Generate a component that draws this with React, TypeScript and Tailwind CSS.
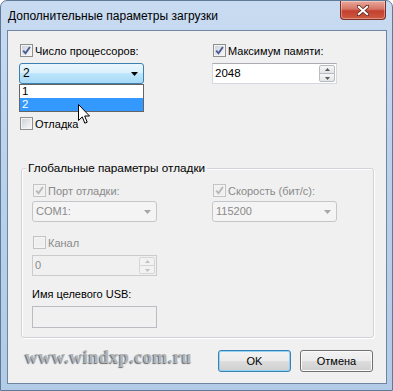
import React from 'react';

function Check({ checked, disabled }: { checked?: boolean; disabled?: boolean }) {
  return (
    <span
      className={`relative w-[13px] h-[13px] shrink-0 border ${
        disabled ? 'border-[#c3c3c3] bg-[#f4f4f4]' : 'border-[#8e8f8f] bg-[#f4f4f4]'
      }`}
    >
      <span
        className={`absolute inset-[1px] ${
          disabled ? 'bg-[#f0f0f0]' : 'bg-gradient-to-br from-[#cfd3d9] to-[#f7f7f7]'
        }`}
      />
      {checked && (
        <svg width="11" height="11" viewBox="0 0 11 11" className="absolute left-0 top-0">
          <path
            d="M2.2 5.6 L4.5 8.3 L8.9 2"
            stroke={disabled ? '#b8b8b8' : '#4a5b97'}
            strokeWidth="1.9"
            fill="none"
          />
        </svg>
      )}
    </span>
  );
}

function CheckRow({ label, checked, disabled }: { label: string; checked?: boolean; disabled?: boolean }) {
  return (
    <div className="flex items-center h-[13px] leading-[13px]">
      <span className="ml-[1px] flex">
        <Check checked={checked} disabled={disabled} />
      </span>
      <span className={`ml-[2px] pt-[1px] whitespace-nowrap ${disabled ? 'text-[#8a8a8a]' : 'text-black'}`}>{label}</span>
    </div>
  );
}

function Arrow({ color }: { color: string }) {
  return (
    <svg width="7" height="4" viewBox="0 0 7 4" className="absolute right-[5px] top-[8px]">
      <path d="M0 0 H7 L3.5 4 Z" fill={color} />
    </svg>
  );
}

function DisabledCombo({ value }: { value: string }) {
  return (
    <div className="relative mt-[4px] h-[21px] rounded-[3px] border border-[#c3c7ca] bg-[#f4f4f4] pl-[3px] leading-[19px] text-[#8a8a8a]">
      {value}
      <Arrow color="#a6a6a6" />
    </div>
  );
}

function SpinButtons({ disabled }: { disabled?: boolean }) {
  const btn = disabled
    ? 'relative flex-1 border border-[#d6d6d6] bg-[#f2f2f2]'
    : 'relative flex-1 border border-[#b7bcc2] bg-gradient-to-b from-[#f7f7f7] to-[#e2e4e7]';
  const fill = disabled ? '#c0c0c0' : '#5a5a5a';
  return (
    <div className="absolute right-[1px] top-[1px] bottom-[1px] w-[16px] flex flex-col">
      <div className={`${btn} rounded-t-[2px]`}>
        <svg width="5" height="3" viewBox="0 0 5 3" className="absolute left-[5px] top-[2px]">
          <path d="M0 3 L2.5 0 L5 3 Z" fill={fill} />
        </svg>
      </div>
      <div className={`${btn} rounded-b-[2px] -mt-[1px]`}>
        <svg width="5" height="3" viewBox="0 0 5 3" className="absolute left-[5px] top-[3px]">
          <path d="M0 0 L5 0 L2.5 3 Z" fill={fill} />
        </svg>
      </div>
    </div>
  );
}

function Button({ label, focused }: { label: string; focused?: boolean }) {
  return (
    <div
      className={`w-[73px] h-[22px] rounded-[3px] border flex items-center justify-center leading-[16px] bg-[linear-gradient(to_bottom,#f2f2f2_0%,#ebebeb_50%,#dddddd_50%,#cfcfcf_100%)] ${
        focused
          ? 'border-[#3c7fb1] shadow-[inset_0_0_0_1px_#8fd3f5]'
          : 'border-[#707070] shadow-[inset_0_0_0_1px_#fbfbfb]'
      }`}
    >
      {label}
    </div>
  );
}

export default function App() {
  return (
    <div className="w-[393px] h-[391px] overflow-hidden bg-white">
      <div className="w-[393px] h-[391px] rounded-t-[7px] border border-[#5f7a97] bg-gradient-to-b from-[#c8dbf1] via-[#b9d0ea] to-[#b2cbe6] font-['Liberation_Sans',Arial,sans-serif] text-[11px] text-black">
        {/* title bar */}
        <div className="flex items-start h-[29px]">
          <div className="pl-[7px] pt-[7px] leading-[16px] text-[12px] text-black whitespace-nowrap">
            Дополнительные параметры загрузки
          </div>
          <div className="relative ml-auto mr-[6px] w-[46px] h-[19px] rounded-b-[4px] border border-t-0 border-[#7b2e26] bg-[linear-gradient(to_bottom,#e8a99c_0%,#d47565_45%,#c2402f_55%,#cf5a3f_100%)] shadow-[inset_0_0_0_1px_rgba(255,255,255,0.35)]">
            <svg width="12" height="11" viewBox="0 0 12 11" className="absolute left-[16px] top-[4px]">
              <path d="M1.5 1.5 L10.5 9.5 M10.5 1.5 L1.5 9.5" stroke="#5a2a22" strokeWidth="3.6" strokeLinecap="square" />
              <path d="M1.8 1.8 L10.2 9.2 M10.2 1.8 L1.8 9.2" stroke="#ffffff" strokeWidth="2" strokeLinecap="square" />
            </svg>
          </div>
        </div>

        {/* client area */}
        <div className="relative ml-[6px] w-[380px] h-[354px] border border-[#6e86a2] bg-[#f0f0f0] pl-[11px] pr-[13px] pt-[13px]">
          <div className="flex">
            <div className="relative w-[125px]">
              <CheckRow label="Число процессоров:" checked />
              <div className="relative mt-[6px] h-[21px]">
                <div className="relative h-[21px] rounded-[3px] border border-[#3c7fb1] bg-[linear-gradient(to_bottom,#eaf6fd_0%,#d9f0fc_50%,#bee6fd_50%,#a7d9f5_100%)] pl-[3px] leading-[19px] text-[12px]">
                  2
                  <Arrow color="#000000" />
                </div>
                <div className="absolute left-0 top-[21px] z-10 w-[125px] border border-[#646464] bg-white text-[11.5px] leading-[13px]">
                  <div className="h-[13px] pl-[2px]">1</div>
                  <div className="h-[13px] pl-[2px] bg-[#3399ff] text-white">2</div>
                </div>
              </div>
              <div className="mt-[33px]">
                <CheckRow label="Отладка" />
              </div>
            </div>
            <div className="ml-[68px] w-[125px]">
              <CheckRow label="Максимум памяти:" checked />
              <div className="relative mt-[6px] h-[21px] border border-[#d5d8de] border-t-[#abadb3] bg-white pl-[2px] leading-[19px] text-[11.5px]">
                2048
                <SpinButtons />
              </div>
            </div>
          </div>

          {/* group box */}
          <div className="relative mt-[38px] ml-[2px] w-[353px] h-[170px] rounded-[3px] border border-[#d0d4d8] shadow-[inset_1px_1px_0_#ffffff,1px_1px_0_#ffffff] pl-[10px] pt-[15px]">
            <div className="absolute left-[4px] -top-[9px] px-[2px] bg-[#f0f0f0] leading-[16px] text-[11.75px] whitespace-nowrap">
              Глобальные параметры отладки
            </div>
            <div className="flex">
              <div className="w-[125px]">
                <CheckRow label="Порт отладки:" checked disabled />
                <DisabledCombo value="COM1:" />
                <div className="mt-[14px]">
                  <CheckRow label="Канал" disabled />
                </div>
                <div className="relative mt-[6px] h-[21px] border border-[#c9cbce] bg-[#f0f0f0] pl-[2px] leading-[19px] text-[#8a8a8a]">
                  0
                  <SpinButtons disabled />
                </div>
                <div className="mt-[10px] leading-[16px] whitespace-nowrap">Имя целевого USB:</div>
                <div className="mt-[4px] h-[22px] border border-[#b9bcc0] bg-[#f0f0f0]" />
              </div>
              <div className="ml-[55px] w-[125px]">
                <CheckRow label="Скорость (бит/с):" checked disabled />
                <DisabledCombo value="115200" />
              </div>
            </div>
          </div>

          {/* bottom row */}
          <div className="flex items-start mt-[12px]">
            <div className="ml-[6px] -mt-[4px] leading-[22px] font-['Liberation_Serif',serif] font-bold text-[18px] tracking-[0.5px] text-[#b4b4b4] [text-shadow:-1px_1px_1px_#6a6a6a] whitespace-nowrap">
              www.windxp.com.ru
            </div>
            <div className="ml-auto flex gap-[9px]">
              <Button label="OK" focused />
              <Button label="Отмена" />
            </div>
          </div>

          {/* mouse pointer */}
          <svg width="13" height="21" viewBox="0 0 13 21" className="absolute left-[70px] top-[73px] z-20">
            <path d="M0.5 0.5 L0.5 16.5 L4.3 12.9 L6.8 19.2 L9.2 18.2 L6.7 12 L11.5 12 Z" fill="#ffffff" stroke="#000000" strokeWidth="1" strokeLinejoin="miter" />
          </svg>
        </div>
      </div>
    </div>
  );
}
